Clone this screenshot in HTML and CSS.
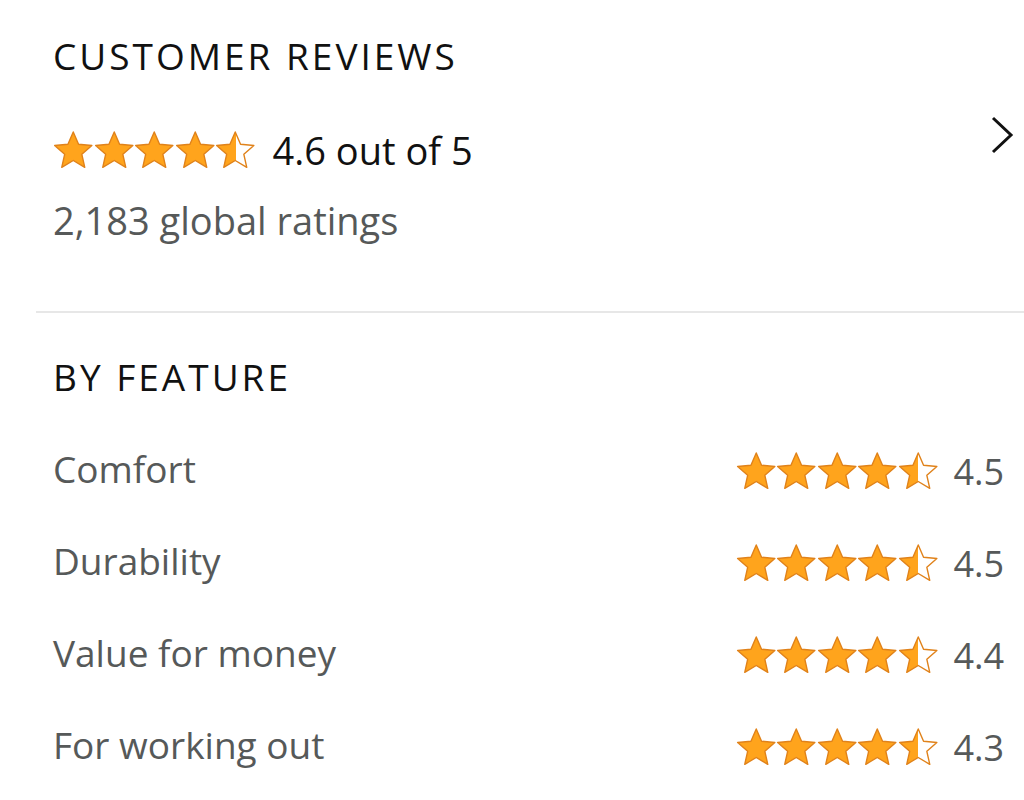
FILE: index.html
```html
<!DOCTYPE html>
<html lang="en">
<head>
<meta charset="utf-8">
<title>Customer reviews</title>
<link rel="stylesheet" href="styles.css">
</head>
<body>
<section class="summary">
  <h2 class="title">CUSTOMER REVIEWS</h2>
  <div class="rating-row">
    <div class="stars big">
      <svg viewBox="0 0 40 38"><path class="s full" d="M20 1L25.3 13.2L38.6 14.5L28.6 23.3L31.5 36.3L20 29.5L8.5 36.3L11.4 23.3L1.4 14.5L14.7 13.2Z"/></svg>
      <svg viewBox="0 0 40 38"><path class="s full" d="M20 1L25.3 13.2L38.6 14.5L28.6 23.3L31.5 36.3L20 29.5L8.5 36.3L11.4 23.3L1.4 14.5L14.7 13.2Z"/></svg>
      <svg viewBox="0 0 40 38"><path class="s full" d="M20 1L25.3 13.2L38.6 14.5L28.6 23.3L31.5 36.3L20 29.5L8.5 36.3L11.4 23.3L1.4 14.5L14.7 13.2Z"/></svg>
      <svg viewBox="0 0 40 38"><path class="s full" d="M20 1L25.3 13.2L38.6 14.5L28.6 23.3L31.5 36.3L20 29.5L8.5 36.3L11.4 23.3L1.4 14.5L14.7 13.2Z"/></svg>
      <svg viewBox="0 0 40 38"><defs><linearGradient id="h0" x1="0" x2="1" y1="0" y2="0"><stop offset="0.52" stop-color="#ffa41c"/><stop offset="0.52" stop-color="#fff"/></linearGradient></defs><path class="s" fill="url(#h0)" d="M20 1L25.3 13.2L38.6 14.5L28.6 23.3L31.5 36.3L20 29.5L8.5 36.3L11.4 23.3L1.4 14.5L14.7 13.2Z"/></svg>
    </div>
    <span class="score">4.6 out of 5</span>
    <svg class="chev" viewBox="0 0 24 38"><polyline points="3,2 21,19 3,36" fill="none" stroke="#111" stroke-width="3"/></svg>
  </div>
  <p class="count">2,183 global ratings</p>
</section>
<hr class="divider">
<section class="features">
  <h2 class="title">BY FEATURE</h2>
  <div class="row">
    <span class="name">Comfort</span>
    <div class="stars">
      <svg viewBox="0 0 40 38"><path class="s full" d="M20 1L25.3 13.2L38.6 14.5L28.6 23.3L31.5 36.3L20 29.5L8.5 36.3L11.4 23.3L1.4 14.5L14.7 13.2Z"/></svg>
      <svg viewBox="0 0 40 38"><path class="s full" d="M20 1L25.3 13.2L38.6 14.5L28.6 23.3L31.5 36.3L20 29.5L8.5 36.3L11.4 23.3L1.4 14.5L14.7 13.2Z"/></svg>
      <svg viewBox="0 0 40 38"><path class="s full" d="M20 1L25.3 13.2L38.6 14.5L28.6 23.3L31.5 36.3L20 29.5L8.5 36.3L11.4 23.3L1.4 14.5L14.7 13.2Z"/></svg>
      <svg viewBox="0 0 40 38"><path class="s full" d="M20 1L25.3 13.2L38.6 14.5L28.6 23.3L31.5 36.3L20 29.5L8.5 36.3L11.4 23.3L1.4 14.5L14.7 13.2Z"/></svg>
      <svg viewBox="0 0 40 38"><defs><linearGradient id="h1" x1="0" x2="1" y1="0" y2="0"><stop offset="0.5" stop-color="#ffa41c"/><stop offset="0.5" stop-color="#fff"/></linearGradient></defs><path class="s" fill="url(#h1)" d="M20 1L25.3 13.2L38.6 14.5L28.6 23.3L31.5 36.3L20 29.5L8.5 36.3L11.4 23.3L1.4 14.5L14.7 13.2Z"/></svg>
    </div>
    <span class="val">4.5</span>
  </div>
  <div class="row">
    <span class="name">Durability</span>
    <div class="stars">
      <svg viewBox="0 0 40 38"><path class="s full" d="M20 1L25.3 13.2L38.6 14.5L28.6 23.3L31.5 36.3L20 29.5L8.5 36.3L11.4 23.3L1.4 14.5L14.7 13.2Z"/></svg>
      <svg viewBox="0 0 40 38"><path class="s full" d="M20 1L25.3 13.2L38.6 14.5L28.6 23.3L31.5 36.3L20 29.5L8.5 36.3L11.4 23.3L1.4 14.5L14.7 13.2Z"/></svg>
      <svg viewBox="0 0 40 38"><path class="s full" d="M20 1L25.3 13.2L38.6 14.5L28.6 23.3L31.5 36.3L20 29.5L8.5 36.3L11.4 23.3L1.4 14.5L14.7 13.2Z"/></svg>
      <svg viewBox="0 0 40 38"><path class="s full" d="M20 1L25.3 13.2L38.6 14.5L28.6 23.3L31.5 36.3L20 29.5L8.5 36.3L11.4 23.3L1.4 14.5L14.7 13.2Z"/></svg>
      <svg viewBox="0 0 40 38"><defs><linearGradient id="h2" x1="0" x2="1" y1="0" y2="0"><stop offset="0.5" stop-color="#ffa41c"/><stop offset="0.5" stop-color="#fff"/></linearGradient></defs><path class="s" fill="url(#h2)" d="M20 1L25.3 13.2L38.6 14.5L28.6 23.3L31.5 36.3L20 29.5L8.5 36.3L11.4 23.3L1.4 14.5L14.7 13.2Z"/></svg>
    </div>
    <span class="val">4.5</span>
  </div>
  <div class="row">
    <span class="name">Value for money</span>
    <div class="stars">
      <svg viewBox="0 0 40 38"><path class="s full" d="M20 1L25.3 13.2L38.6 14.5L28.6 23.3L31.5 36.3L20 29.5L8.5 36.3L11.4 23.3L1.4 14.5L14.7 13.2Z"/></svg>
      <svg viewBox="0 0 40 38"><path class="s full" d="M20 1L25.3 13.2L38.6 14.5L28.6 23.3L31.5 36.3L20 29.5L8.5 36.3L11.4 23.3L1.4 14.5L14.7 13.2Z"/></svg>
      <svg viewBox="0 0 40 38"><path class="s full" d="M20 1L25.3 13.2L38.6 14.5L28.6 23.3L31.5 36.3L20 29.5L8.5 36.3L11.4 23.3L1.4 14.5L14.7 13.2Z"/></svg>
      <svg viewBox="0 0 40 38"><path class="s full" d="M20 1L25.3 13.2L38.6 14.5L28.6 23.3L31.5 36.3L20 29.5L8.5 36.3L11.4 23.3L1.4 14.5L14.7 13.2Z"/></svg>
      <svg viewBox="0 0 40 38"><defs><linearGradient id="h3" x1="0" x2="1" y1="0" y2="0"><stop offset="0.5" stop-color="#ffa41c"/><stop offset="0.5" stop-color="#fff"/></linearGradient></defs><path class="s" fill="url(#h3)" d="M20 1L25.3 13.2L38.6 14.5L28.6 23.3L31.5 36.3L20 29.5L8.5 36.3L11.4 23.3L1.4 14.5L14.7 13.2Z"/></svg>
    </div>
    <span class="val">4.4</span>
  </div>
  <div class="row">
    <span class="name">For working out</span>
    <div class="stars">
      <svg viewBox="0 0 40 38"><path class="s full" d="M20 1L25.3 13.2L38.6 14.5L28.6 23.3L31.5 36.3L20 29.5L8.5 36.3L11.4 23.3L1.4 14.5L14.7 13.2Z"/></svg>
      <svg viewBox="0 0 40 38"><path class="s full" d="M20 1L25.3 13.2L38.6 14.5L28.6 23.3L31.5 36.3L20 29.5L8.5 36.3L11.4 23.3L1.4 14.5L14.7 13.2Z"/></svg>
      <svg viewBox="0 0 40 38"><path class="s full" d="M20 1L25.3 13.2L38.6 14.5L28.6 23.3L31.5 36.3L20 29.5L8.5 36.3L11.4 23.3L1.4 14.5L14.7 13.2Z"/></svg>
      <svg viewBox="0 0 40 38"><path class="s full" d="M20 1L25.3 13.2L38.6 14.5L28.6 23.3L31.5 36.3L20 29.5L8.5 36.3L11.4 23.3L1.4 14.5L14.7 13.2Z"/></svg>
      <svg viewBox="0 0 40 38"><defs><linearGradient id="h4" x1="0" x2="1" y1="0" y2="0"><stop offset="0.5" stop-color="#ffa41c"/><stop offset="0.5" stop-color="#fff"/></linearGradient></defs><path class="s" fill="url(#h4)" d="M20 1L25.3 13.2L38.6 14.5L28.6 23.3L31.5 36.3L20 29.5L8.5 36.3L11.4 23.3L1.4 14.5L14.7 13.2Z"/></svg>
    </div>
    <span class="val">4.3</span>
  </div>
</section>
</body>
</html>
```

FILE: styles.css
```css
html, body {
  margin: 0;
  padding: 0;
  background: #fff;
}
body {
  font-family: "Open Sans", "Noto Sans", sans-serif;
  color: #111;
}
.summary {
  padding: 34px 10px 0 53px;
}
.title {
  margin: 0;
  font-size: 37px;
  line-height: 44px;
  font-weight: 400;
  letter-spacing: 3px;
  color: #111;
}
.rating-row {
  display: flex;
  align-items: center;
  height: 40px;
  margin-top: 52px;
}
.stars {
  display: flex;
  align-items: center;
}
.stars svg {
  width: 40.5px;
  height: 38px;
  display: block;
}
.s {
  stroke: #e0821a;
  stroke-width: 1.4;
  stroke-linejoin: round;
}
.full {
  fill: #ffa41c;
}
.score {
  margin-left: 17px;
  font-size: 38px;
  line-height: 40px;
  color: #111;
}
.chev {
  margin-left: auto;
  align-self: flex-start;
  margin-top: -14px;
  width: 24px;
  height: 38px;
}
.count {
  margin: 28px 0 0;
  font-size: 38px;
  line-height: 44px;
  color: #565959;
}
.divider {
  margin: 69px 0 0 36px;
  border: 0;
  height: 2px;
  background: #e7e7e7;
}
.features {
  padding: 42px 20px 0 53px;
}
.features .title {
  margin-bottom: 24px;
}
.row {
  display: flex;
  align-items: center;
  height: 92px;
}
.name {
  flex: 1;
  font-size: 37px;
  line-height: 44px;
  color: #565959;
}
.val {
  margin-left: 15px;
  margin-top: 6px;
  font-size: 36px;
  line-height: 44px;
  color: #565959;
}
.row .stars {
  margin-top: 4px;
}
```
